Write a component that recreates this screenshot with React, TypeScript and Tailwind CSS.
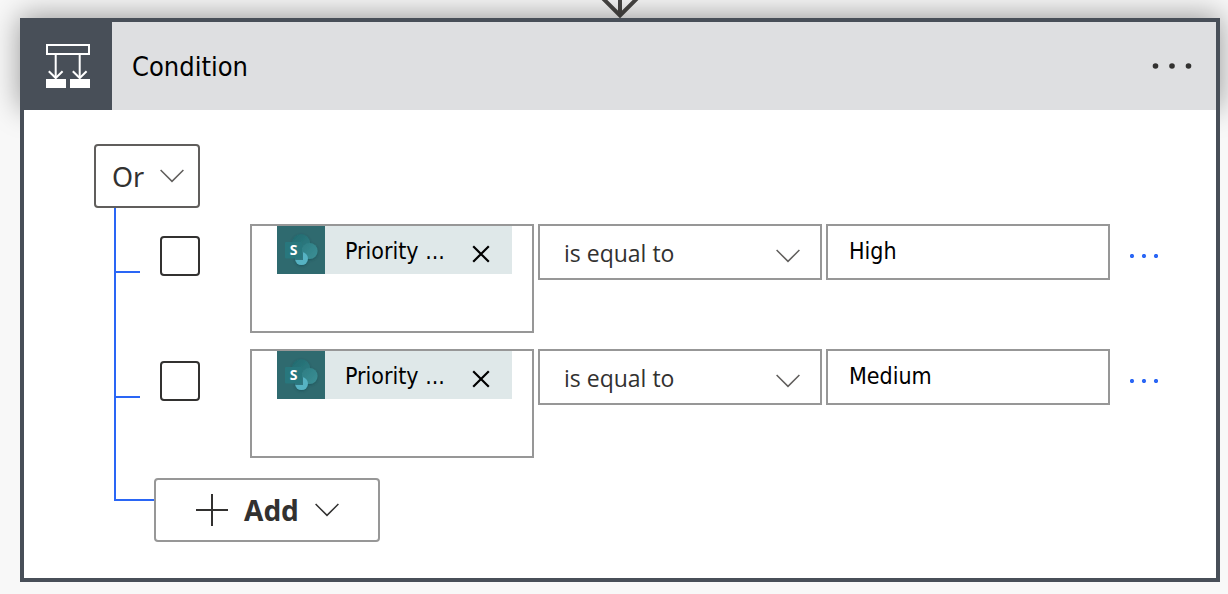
import { useState } from "react";

type Row = { id: number; value: string };

const initialRows: Row[] = [
  { id: 1, value: "High" },
  { id: 2, value: "Medium" },
];

function Chevron({ className }: { className: string }) {
  return (
    <svg
      viewBox="0 0 24 14"
      className={`h-3.5 w-6 ${className}`}
      fill="none"
      stroke="currentColor"
      strokeWidth="1.5"
      aria-hidden="true"
    >
      <path d="M0.6 1 12 12.4 23.4 1" />
    </svg>
  );
}

function ConditionIcon() {
  return (
    <svg viewBox="0 0 44 44" className="size-11" fill="none" stroke="#fff" aria-hidden="true">
      <rect x="1" y="1" width="42" height="9" strokeWidth="2" />
      <path d="M9.7 11v23M33.7 11v23" strokeWidth="2" />
      <path d="M2.8 27.2 9.7 34l6.9-6.8M26.8 27.2l6.9 6.8 6.9-6.8" strokeWidth="2" />
      <path d="M0 35h20v9H0zM24 35h20v9H24z" fill="#fff" stroke="none" />
    </svg>
  );
}

function SharePointIcon() {
  return (
    <svg viewBox="0 0 48 48" className="size-12 shrink-0 bg-[#2f6a6f]" aria-hidden="true">
      <defs>
        <linearGradient id="sp-top" x1="0" y1="0" x2="1" y2="1">
          <stop offset="0" stopColor="#21696e" />
          <stop offset="1" stopColor="#307f85" />
        </linearGradient>
        <linearGradient id="sp-right" x1="0" y1="0" x2="1" y2="1">
          <stop offset="0" stopColor="#2c7d83" />
          <stop offset="1" stopColor="#3d9096" />
        </linearGradient>
        <filter id="sp-shadow" x="-30%" y="-30%" width="160%" height="160%">
          <feDropShadow dx="0" dy="1" stdDeviation="1.5" floodColor="#0d3a3d" floodOpacity="0.4" />
        </filter>
        <clipPath id="sp-bottom">
          <circle cx="24.5" cy="32.6" r="6.5" />
        </clipPath>
      </defs>
      <g filter="url(#sp-shadow)">
        <circle cx="24" cy="17" r="9" fill="url(#sp-top)" />
        <circle cx="32.6" cy="25" r="8" fill="url(#sp-right)" />
        <circle cx="24.5" cy="32.6" r="6.5" fill="#56b3c3" />
      </g>
      <path d="M16 16h10v18H16z" fill="#174f53" opacity="0.6" clipPath="url(#sp-bottom)" />
      <rect x="8" y="16" width="17" height="16.5" rx="1" fill="#28777d" />
      <text
        x="16.5"
        y="28.5"
        textAnchor="middle"
        fill="#fff"
        fontFamily="'Open Sans', sans-serif"
        fontSize="14"
        fontWeight="700"
      >
        S
      </text>
    </svg>
  );
}

function Dots({ size }: { size: "large" | "small" }) {
  return size === "large" ? (
    <svg viewBox="0 0 40 8" className="h-2 w-10" fill="#323130" aria-hidden="true">
      <circle cx="3.5" cy="4" r="2.8" />
      <circle cx="20" cy="4" r="2.8" />
      <circle cx="36.5" cy="4" r="2.8" />
    </svg>
  ) : (
    <svg viewBox="0 0 28 4" className="h-1 w-7" fill="#2a66f5" aria-hidden="true">
      <circle cx="2" cy="2" r="2.1" />
      <circle cx="14" cy="2" r="2.1" />
      <circle cx="26" cy="2" r="2.1" />
    </svg>
  );
}

function ConditionRow({ row }: { row: Row }) {
  const [value, setValue] = useState(row.value);
  const [hasToken, setHasToken] = useState(true);

  return (
    <div className="flex items-start">
      <span className="mt-[47px] h-0.5 w-6 shrink-0 bg-[#2a66f5]" />
      <input
        type="checkbox"
        aria-label={`Select condition ${row.id}`}
        className="mt-3 ml-5 size-10 shrink-0 appearance-none rounded border-2 border-[#323130] bg-white checked:bg-[#323130]"
      />
      <div className="ml-[50px] grid min-w-0 flex-1 grid-cols-3 items-start gap-1">
        <div className="h-[109px] border-2 border-[#979797] pl-[25px]">
          {hasToken && (
            <div className="flex h-12 w-[235px] max-w-full items-center bg-[#dfe8e9] text-[23px] text-black">
              <SharePointIcon />
              <span className="ml-5 pt-0.5 whitespace-nowrap">Priority ...</span>
              <button
                type="button"
                aria-label="Remove Priority"
                onClick={() => setHasToken(false)}
                className="mt-2 mr-[22px] ml-auto"
              >
                <svg viewBox="0 0 18 18" className="size-[18px]" stroke="#000" strokeWidth="2.2" aria-hidden="true">
                  <path d="M1.2 1.2 16.8 16.8M16.8 1.2 1.2 16.8" />
                </svg>
              </button>
            </div>
          )}
        </div>
        <div className="relative">
          <select
            aria-label={`Operator ${row.id}`}
            className="h-14 w-full appearance-none border-2 border-[#979797] bg-white pt-0.5 pl-6 font-['Open_Sans',sans-serif] text-[23px] text-[#323130]"
          >
            <option>is equal to</option>
            <option>is not equal to</option>
          </select>
          <Chevron className="pointer-events-none absolute top-[25px] right-[22px] text-[#605e5c]" />
        </div>
        <input
          type="text"
          aria-label={`Value ${row.id}`}
          value={value}
          onChange={(e) => setValue(e.target.value)}
          className="h-14 w-full min-w-0 border-2 border-[#979797] bg-white px-[21px] pb-0.5 text-[23px] text-black"
        />
      </div>
      <button type="button" aria-label={`More options for condition ${row.id}`} className="mt-[30px] mr-[58px] ml-5 shrink-0">
        <Dots size="small" />
      </button>
    </div>
  );
}

export default function App() {
  return (
    <main className="flex min-h-screen flex-col overflow-hidden bg-[#f8f8f8] pr-2 pb-3 pl-5 font-['DejaVu_Sans_Condensed','DejaVu_Sans',sans-serif]">
      <div className="flex h-[18px] justify-center">
        <svg viewBox="0 0 40 18" className="h-[18px] w-10" fill="none" stroke="#484644" strokeWidth="4" aria-hidden="true">
          <path d="M20 0v15M2 -2.5 20 15.5 38 -2.5" />
        </svg>
      </div>
      <section className="flex flex-1 flex-col">
        <header className="flex h-[92px] items-center border-x-4 border-t-4 border-[#484f58] bg-[#dedfe1] shadow-[0_-2px_28px_rgba(0,0,0,0.4)]">
          <div className="flex h-full w-[88px] items-center justify-center bg-[#484f58]">
            <ConditionIcon />
          </div>
          <h1 className="ml-5 pt-0.5 text-[27px] text-black">Condition</h1>
          <button type="button" aria-label="Condition menu" className="mr-6 ml-auto">
            <Dots size="large" />
          </button>
        </header>
        <div className="relative flex-1 border-x-4 border-b-4 border-[#484f58] bg-white pt-[34px] pb-9 pl-[70px]">
          <div className="relative w-[106px]">
            <select
              aria-label="Group operator"
              className="block h-16 w-full appearance-none rounded border-2 border-[#605e5c] bg-white pt-0.5 pl-4 font-['Noto_Sans',sans-serif] text-[27px] text-[#323130]"
            >
              <option>Or</option>
              <option>And</option>
            </select>
            <Chevron className="pointer-events-none absolute top-[25px] right-4 text-[#605e5c]" />
          </div>
          <div className="ml-5 flex flex-col gap-4 border-l-2 border-[#2a66f5] pt-4">
            {initialRows.map((row) => (
              <ConditionRow key={row.id} row={row} />
            ))}
          </div>
          <div className="ml-5 flex items-start">
            <span className="h-[43px] w-10 border-b-2 border-l-2 border-[#2a66f5]" />
            <button
              type="button"
              className="mt-5 flex h-16 w-[226px] items-center rounded border-2 border-[#979797] bg-white pl-10 font-['Noto_Sans',sans-serif] text-[28px] font-bold text-[#323130]"
            >
              <svg viewBox="0 0 32 32" className="size-8" stroke="currentColor" strokeWidth="2" aria-hidden="true">
                <path d="M16 0v32M0 16h32" />
              </svg>
              <span className="ml-4">Add</span>
              <Chevron className="ml-4" />
            </button>
          </div>
        </div>
      </section>
    </main>
  );
}
